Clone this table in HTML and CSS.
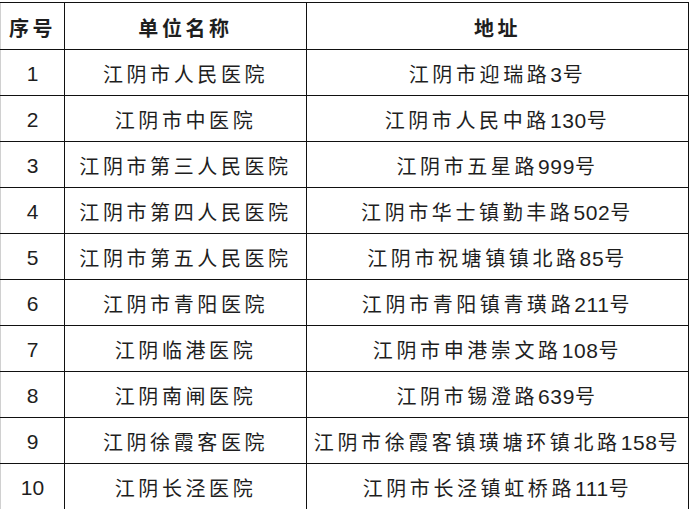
FILE: index.html
```html
<!DOCTYPE html>
<html lang="zh-CN">
<head>
<meta charset="utf-8">
<title>医院地址</title>
<link rel="stylesheet" href="styles.css">
</head>
<body>
<table class="grid">
  <colgroup>
    <col class="c1"><col class="c2"><col class="c3">
  </colgroup>
  <thead>
    <tr><th>序号</th><th>单位名称</th><th>地址</th></tr>
  </thead>
  <tbody>
    <tr><td class="n">1</td><td>江阴市人民医院</td><td>江阴市迎瑞路<span class="d">3</span>号</td></tr>
    <tr><td class="n">2</td><td>江阴市中医院</td><td>江阴市人民中路<span class="d">130</span>号</td></tr>
    <tr><td class="n">3</td><td>江阴市第三人民医院</td><td>江阴市五星路<span class="d">999</span>号</td></tr>
    <tr><td class="n">4</td><td>江阴市第四人民医院</td><td>江阴市华士镇勤丰路<span class="d">502</span>号</td></tr>
    <tr><td class="n">5</td><td>江阴市第五人民医院</td><td>江阴市祝塘镇镇北路<span class="d">85</span>号</td></tr>
    <tr><td class="n">6</td><td>江阴市青阳医院</td><td>江阴市青阳镇青璜路<span class="d">211</span>号</td></tr>
    <tr><td class="n">7</td><td>江阴临港医院</td><td>江阴市申港崇文路<span class="d">108</span>号</td></tr>
    <tr><td class="n">8</td><td>江阴南闸医院</td><td>江阴市锡澄路<span class="d">639</span>号</td></tr>
    <tr><td class="n">9</td><td>江阴徐霞客医院</td><td>江阴市徐霞客镇璜塘环镇北路<span class="d">158</span>号</td></tr>
    <tr><td class="n">10</td><td>江阴长泾医院</td><td>江阴市长泾镇虹桥路<span class="d">111</span>号</td></tr>
  </tbody>
</table>
</body>
</html>
```
FILE: styles.css
```css
html, body {
  margin: 0;
  padding: 0;
  background: #fff;
}
body {
  padding-top: 2px;
}
.grid {
  border-collapse: collapse;
  table-layout: fixed;
  width: 688px;
  color: #1e1e1e;
  font-family: "Noto Sans CJK SC", "Noto Sans", sans-serif;
  font-size: 20px;
}
.c1 { width: 64px; }
.c2 { width: 242px; }
.c3 { width: 382px; }
.grid th, .grid td {
  box-sizing: border-box;
  height: 46px;
  padding: 3px 0 0;
  text-align: center;
  vertical-align: middle;
  white-space: nowrap;
  border: 1px solid #111;
  letter-spacing: 3.6px;
  line-height: 20px;
}
.grid tr > :first-child {
  border-left-color: #d0d0d0;
}
.grid th {
  font-weight: bold;
  padding-top: 4px;
  height: 47px;
}
.grid td.n {
  font-family: "Liberation Sans", Arial, sans-serif;
  font-size: 21px;
  letter-spacing: 0;
}
.d {
  font-family: "Liberation Sans", Arial, sans-serif;
  font-size: 21px;
  letter-spacing: 0.6px;
  line-height: 20px;
}
```
